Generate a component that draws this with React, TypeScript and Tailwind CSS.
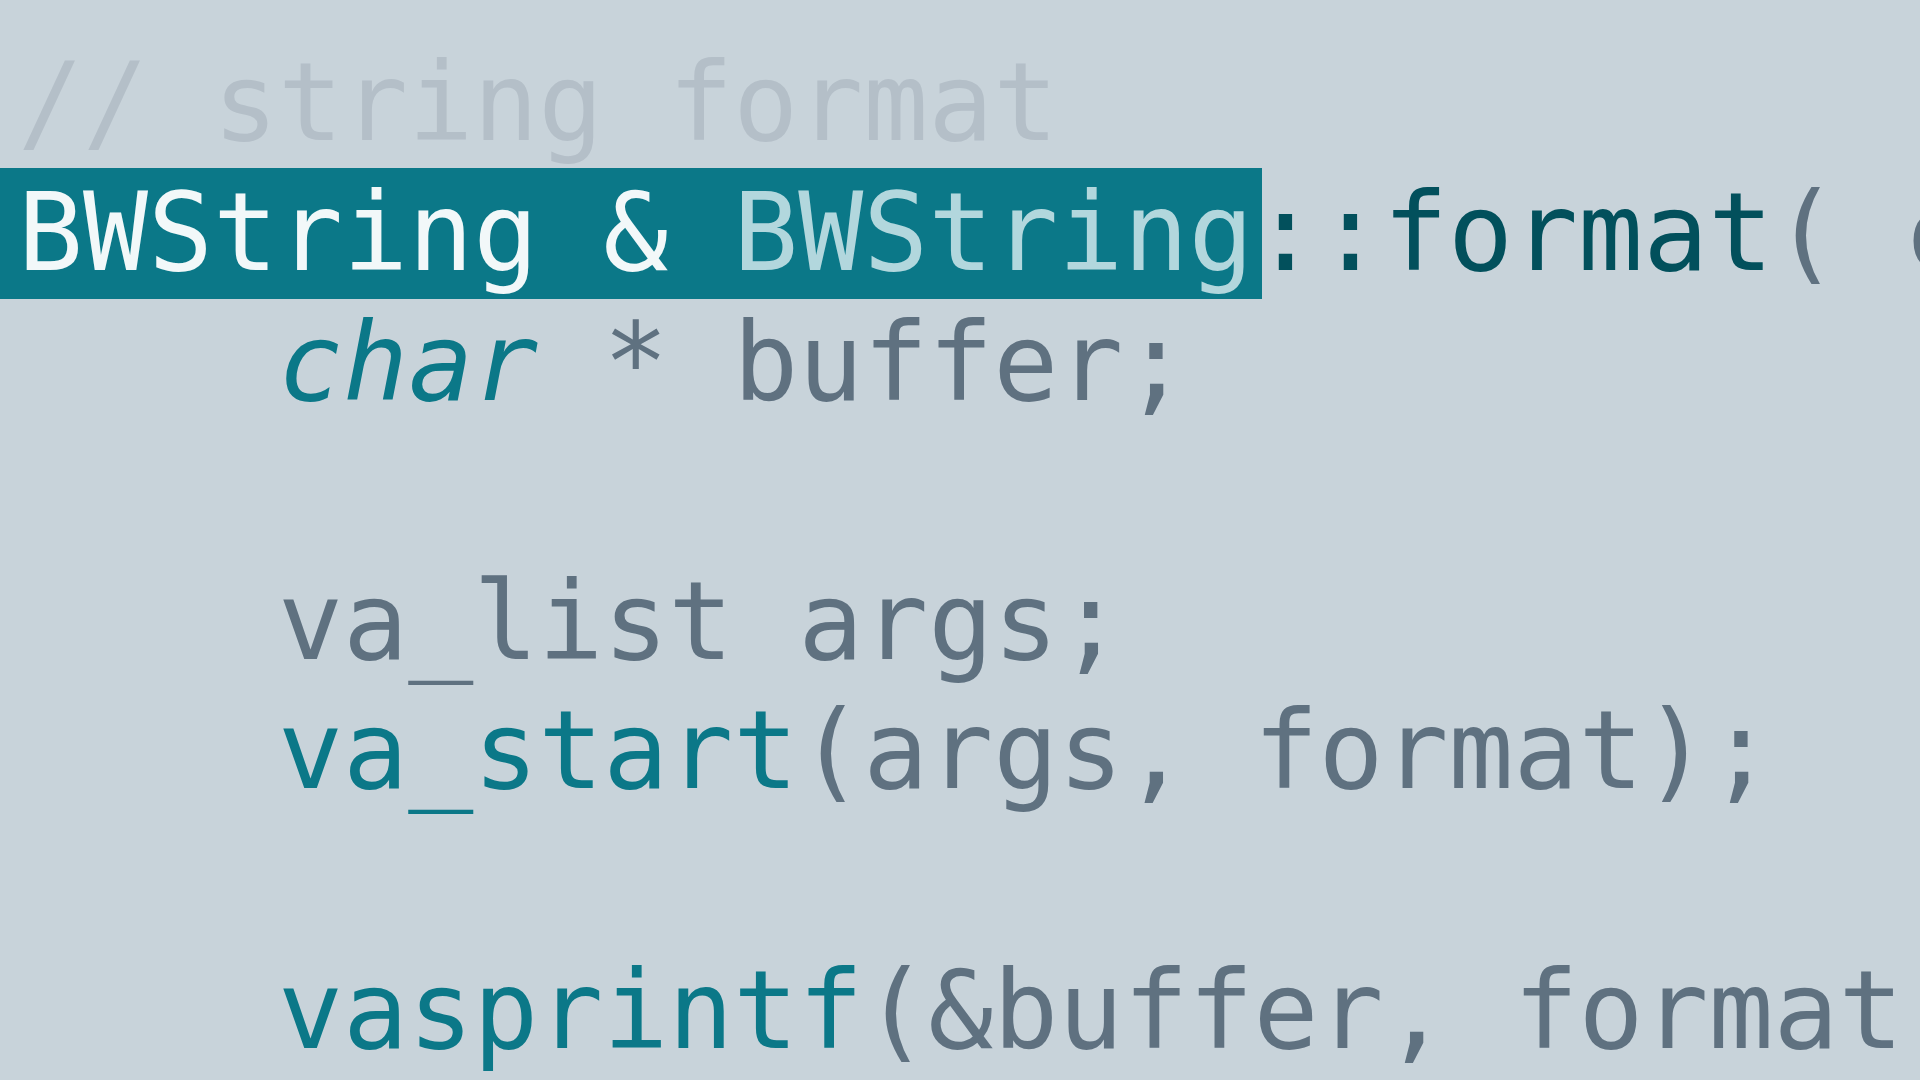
import React from 'react';

const mono = "font-['DejaVu_Sans_Mono',monospace]";

const App: React.FC = () => {
  return (
    <div className={`w-[1920px] h-[1080px] overflow-hidden bg-[#c8d3da] ${mono} text-[108px] leading-[1.2] pt-[38px]`}>
      {/* comment */}
      <div className="whitespace-pre pl-[18px] text-[#b4bfc8]">// string format</div>

      {/* signature, first half is the selection */}
      <div className="whitespace-pre flex h-[131px]">
        <span className="bg-[#0b7888] pl-[18px] w-[1262px] shrink-0">
          <span className="text-[#f2f8f9]">BWString &amp; </span>
          <span className="text-[#b2d7dd]">BWString</span>
        </span>
        <span className="-ml-[9px]">
          <span className="text-[#02505c]">::format</span>
          <span className="text-[#5f7180]">( const char * format, ...)</span>
        </span>
      </div>

      <div className="whitespace-pre pl-[18px] -mt-[1px]">
        <span>    </span>
        <span className="italic text-[#0b7888]">char</span>
        <span className="text-[#5f7180]"> * buffer;</span>
      </div>

      <div className="whitespace-pre pl-[18px]"> </div>

      <div className="whitespace-pre pl-[18px] text-[#5f7180]">    va_list args;</div>

      <div className="whitespace-pre pl-[18px]">
        <span>    </span>
        <span className="text-[#0b7888]">va_start</span>
        <span className="text-[#5f7180]">(args, format);</span>
      </div>

      <div className="whitespace-pre pl-[18px]"> </div>

      <div className="whitespace-pre pl-[18px]">
        <span>    </span>
        <span className="text-[#0b7888]">vasprintf</span>
        <span className="text-[#5f7180]">(&amp;buffer, format, args);</span>
      </div>
    </div>
  );
};

export default App;
